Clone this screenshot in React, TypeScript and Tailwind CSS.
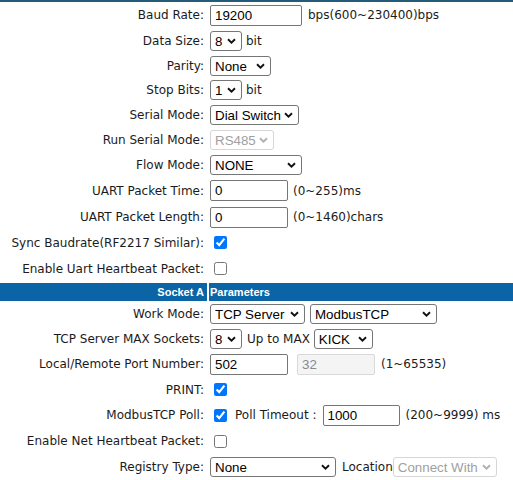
import { ReactNode } from "react";

const ctl = "font-['Liberation_Sans',Arial,sans-serif] text-[13.33px]";

function Sel({ value, w, disabled }: { value: string; w: string; disabled?: boolean }) {
  return (
    <div className={`relative h-[20px] shrink-0 ${w}`}>
      <select
        disabled={disabled}
        defaultValue={value}
        className={`${ctl} appearance-none w-full h-full rounded-[3px] border pl-[4px] pr-[16px] ${
          disabled ? "border-[#d6d6d6] bg-white text-[#a0a0a0]" : "border-[#767676] bg-white text-black"
        }`}
      >
        <option>{value}</option>
      </select>
      <svg
        className="absolute right-[6px] top-[7px] pointer-events-none"
        width="9"
        height="6"
        viewBox="0 0 9 6"
      >
        <path
          d="M1 1.2 L4.5 4.6 L8 1.2"
          fill="none"
          stroke={disabled ? "#b0b0b0" : "#111"}
          strokeWidth="1.9"
        />
      </svg>
    </div>
  );
}

function Txt({ value, w, disabled }: { value: string; w: string; disabled?: boolean }) {
  return (
    <input
      type="text"
      disabled={disabled}
      defaultValue={value}
      className={`${ctl} ${w} h-[21px] shrink-0 rounded-[2px] border px-[4px] ${
        disabled ? "border-[#d9d9d9] bg-[#f4f4f4] text-[#8a8a8a]" : "border-[#767676] bg-white text-black"
      }`}
    />
  );
}

function Chk({ on }: { on?: boolean }) {
  return (
    <input
      type="checkbox"
      defaultChecked={on}
      className="ml-[4px] w-[13px] h-[13px] shrink-0 accent-[#0075ff]"
    />
  );
}

function Row({ label, h, children }: { label: string; h: string; children: ReactNode }) {
  return (
    <div className={`grid grid-cols-[207px_1fr] ${h}`}>
      <div className="flex items-center justify-end pr-[3px] whitespace-nowrap">{label}</div>
      <div className="flex items-center pl-[3px] whitespace-nowrap">{children}</div>
    </div>
  );
}

export default function App() {
  return (
    <div className="w-[513px] h-[480px] overflow-hidden bg-white border-t-2 border-[#235b78] font-['DejaVu_Sans',Verdana,sans-serif] text-[12px] text-[#1b1b1b]">
      <Row label="Baud Rate:" h="h-[26px]">
        <Txt value="19200" w="w-[92px]" />
        <span className="ml-[6px]">bps(600~230400)bps</span>
      </Row>
      <Row label="Data Size:" h="h-[25px]">
        <Sel value="8" w="w-[32px]" />
        <span className="ml-[4px]">bit</span>
      </Row>
      <Row label="Parity:" h="h-[25px]">
        <Sel value="None" w="w-[61px]" />
      </Row>
      <Row label="Stop Bits:" h="h-[24px]">
        <Sel value="1" w="w-[32px]" />
        <span className="ml-[4px]">bit</span>
      </Row>
      <Row label="Serial Mode:" h="h-[25px]">
        <Sel value="Dial Switch" w="w-[89px]" />
      </Row>
      <Row label="Run Serial Mode:" h="h-[25px]">
        <Sel value="RS485" w="w-[64px]" disabled />
      </Row>
      <Row label="Flow Mode:" h="h-[25px]">
        <Sel value="NONE" w="w-[92px]" />
      </Row>
      <Row label="UART Packet Time:" h="h-[27px]">
        <Txt value="0" w="w-[78px]" />
        <span className="ml-[5px]">(0~255)ms</span>
      </Row>
      <Row label="UART Packet Length:" h="h-[26px]">
        <Txt value="0" w="w-[78px]" />
        <span className="ml-[5px]">(0~1460)chars</span>
      </Row>
      <Row label="Sync Baudrate(RF2217 Similar):" h="h-[25px]">
        <Chk on />
      </Row>
      <Row label="Enable Uart Heartbeat Packet:" h="h-[27px]">
        <Chk />
      </Row>

      <div className="grid grid-cols-[207px_1fr] gap-[2px] h-[18px] mt-px font-['Liberation_Sans',Arial,sans-serif] font-bold text-[11px] text-white">
        <div className="bg-[#0a64a6] flex items-center justify-end pr-[3px]">Socket A</div>
        <div className="bg-[#0a64a6] flex items-center pl-[1px]">Parameters</div>
      </div>

      <Row label="Work Mode:" h="h-[25px]">
        <Sel value="TCP Server" w="w-[95px]" />
        <div className="ml-[5px]">
          <Sel value="ModbusTCP" w="w-[127px]" />
        </div>
      </Row>
      <Row label="TCP Server MAX Sockets:" h="h-[25px]">
        <Sel value="8" w="w-[32px]" />
        <span className="ml-[5px] mr-[4px]">Up to MAX</span>
        <Sel value="KICK" w="w-[59px]" />
      </Row>
      <Row label="Local/Remote Port Number:" h="h-[26px]">
        <Txt value="502" w="w-[78px]" />
        <div className="ml-[9px]">
          <Txt value="32" w="w-[78px]" disabled />
        </div>
        <span className="ml-[6px]">(1~65535)</span>
      </Row>
      <Row label="PRINT:" h="h-[25px]">
        <Chk on />
      </Row>
      <Row label="ModbusTCP Poll:" h="h-[26px]">
        <Chk on />
        <span className="ml-[8px] mr-[6px]">Poll Timeout :</span>
        <Txt value="1000" w="w-[77px]" />
        <span className="ml-[6px]">(200~9999) ms</span>
      </Row>
      <Row label="Enable Net Heartbeat Packet:" h="h-[26px]">
        <Chk />
      </Row>
      <Row label="Registry Type:" h="h-[26px]">
        <Sel value="None" w="w-[126px]" />
        <span className="ml-[6px]">Location</span>
        <Sel value="Connect With" w="w-[104px]" disabled />
      </Row>
    </div>
  );
}
